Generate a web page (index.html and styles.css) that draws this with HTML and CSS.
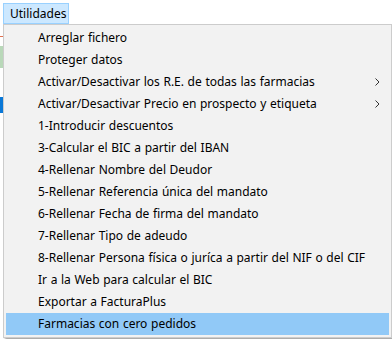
FILE: index.html
```html
<!DOCTYPE html>
<html>
  <head>
    <title>Utilidades</title>
    <meta name="viewport" content="width=device-width, initial-scale=1.0">
    <link rel="stylesheet" href="styles.css">
  </head>
  <body>
    <div class="screen">
      <div class="behind">
        <div class="bline red"></div>
        <div class="bfill green"></div>
        <div class="bfill blue"></div>
      </div>
      <div class="menubar">
        <div class="menutop">Utilidades</div>
      </div>
      <ul class="dropdown">
        <li>Arreglar fichero</li>
        <li>Proteger datos</li>
        <li class="sub">Activar/Desactivar los R.E. de todas las farmacias
          <svg class="arrow" width="5" height="8" viewBox="0 0 5 8"><path d="M0.5 0.5 L4 4 L0.5 7.5" fill="none" stroke="#333" stroke-width="1"/></svg></li>
        <li class="sub">Activar/Desactivar Precio en prospecto y etiqueta
          <svg class="arrow" width="5" height="8" viewBox="0 0 5 8"><path d="M0.5 0.5 L4 4 L0.5 7.5" fill="none" stroke="#333" stroke-width="1"/></svg></li>
        <li>1-Introducir descuentos</li>
        <li>3-Calcular el BIC a partir del IBAN</li>
        <li>4-Rellenar Nombre del Deudor</li>
        <li>5-Rellenar Referencia única del mandato</li>
        <li>6-Rellenar Fecha de firma del mandato</li>
        <li>7-Rellenar Tipo de adeudo</li>
        <li>8-Rellenar Persona física o juríca a partir del NIF o del CIF</li>
        <li>Ir a la Web para calcular el BIC</li>
        <li>Exportar a FacturaPlus</li>
        <li class="hover">Farmacias con cero pedidos</li>
      </ul>
    </div>
  </body>
</html>
```

FILE: styles.css
```css
*{box-sizing:border-box;margin:0;padding:0;}
body{background:#fff;font-family:"Noto Sans","Open Sans",sans-serif;font-size:12px;color:#000;}
.screen{position:relative;width:392px;height:339px;overflow:hidden;background:#fff;}
.behind{position:absolute;left:0;top:24px;width:4px;height:315px;}
.bline{position:absolute;left:0;width:4px;height:1px;}
.red{top:12px;background:#e07050;}
.bfill{position:absolute;left:0;width:4px;}
.green{top:22px;height:22px;background:#b9d8b9;}
.blue{top:73px;height:16px;background:#0a78d7;}
.menubar{height:24px;padding:3px 0 0 3px;background:#fff;}
.menutop{display:inline-block;height:21px;width:66px;line-height:19px;padding-left:6px;
  background:#cce8ff;border:1px solid #99d1ff;}
.dropdown{position:relative;list-style:none;margin-left:3px;width:389px;height:314px;
  background:#f2f2f2;border:1px solid #cccccc;padding:2px 2px;
  box-shadow:2px 2px 2px rgba(0,0,0,.35);}
.dropdown li{position:relative;height:22px;line-height:22px;padding-left:32px;white-space:nowrap;word-spacing:0.5px;}
.dropdown li.hover{background:#91c9f7;}
.arrow{position:absolute;right:9px;top:7px;}
```
